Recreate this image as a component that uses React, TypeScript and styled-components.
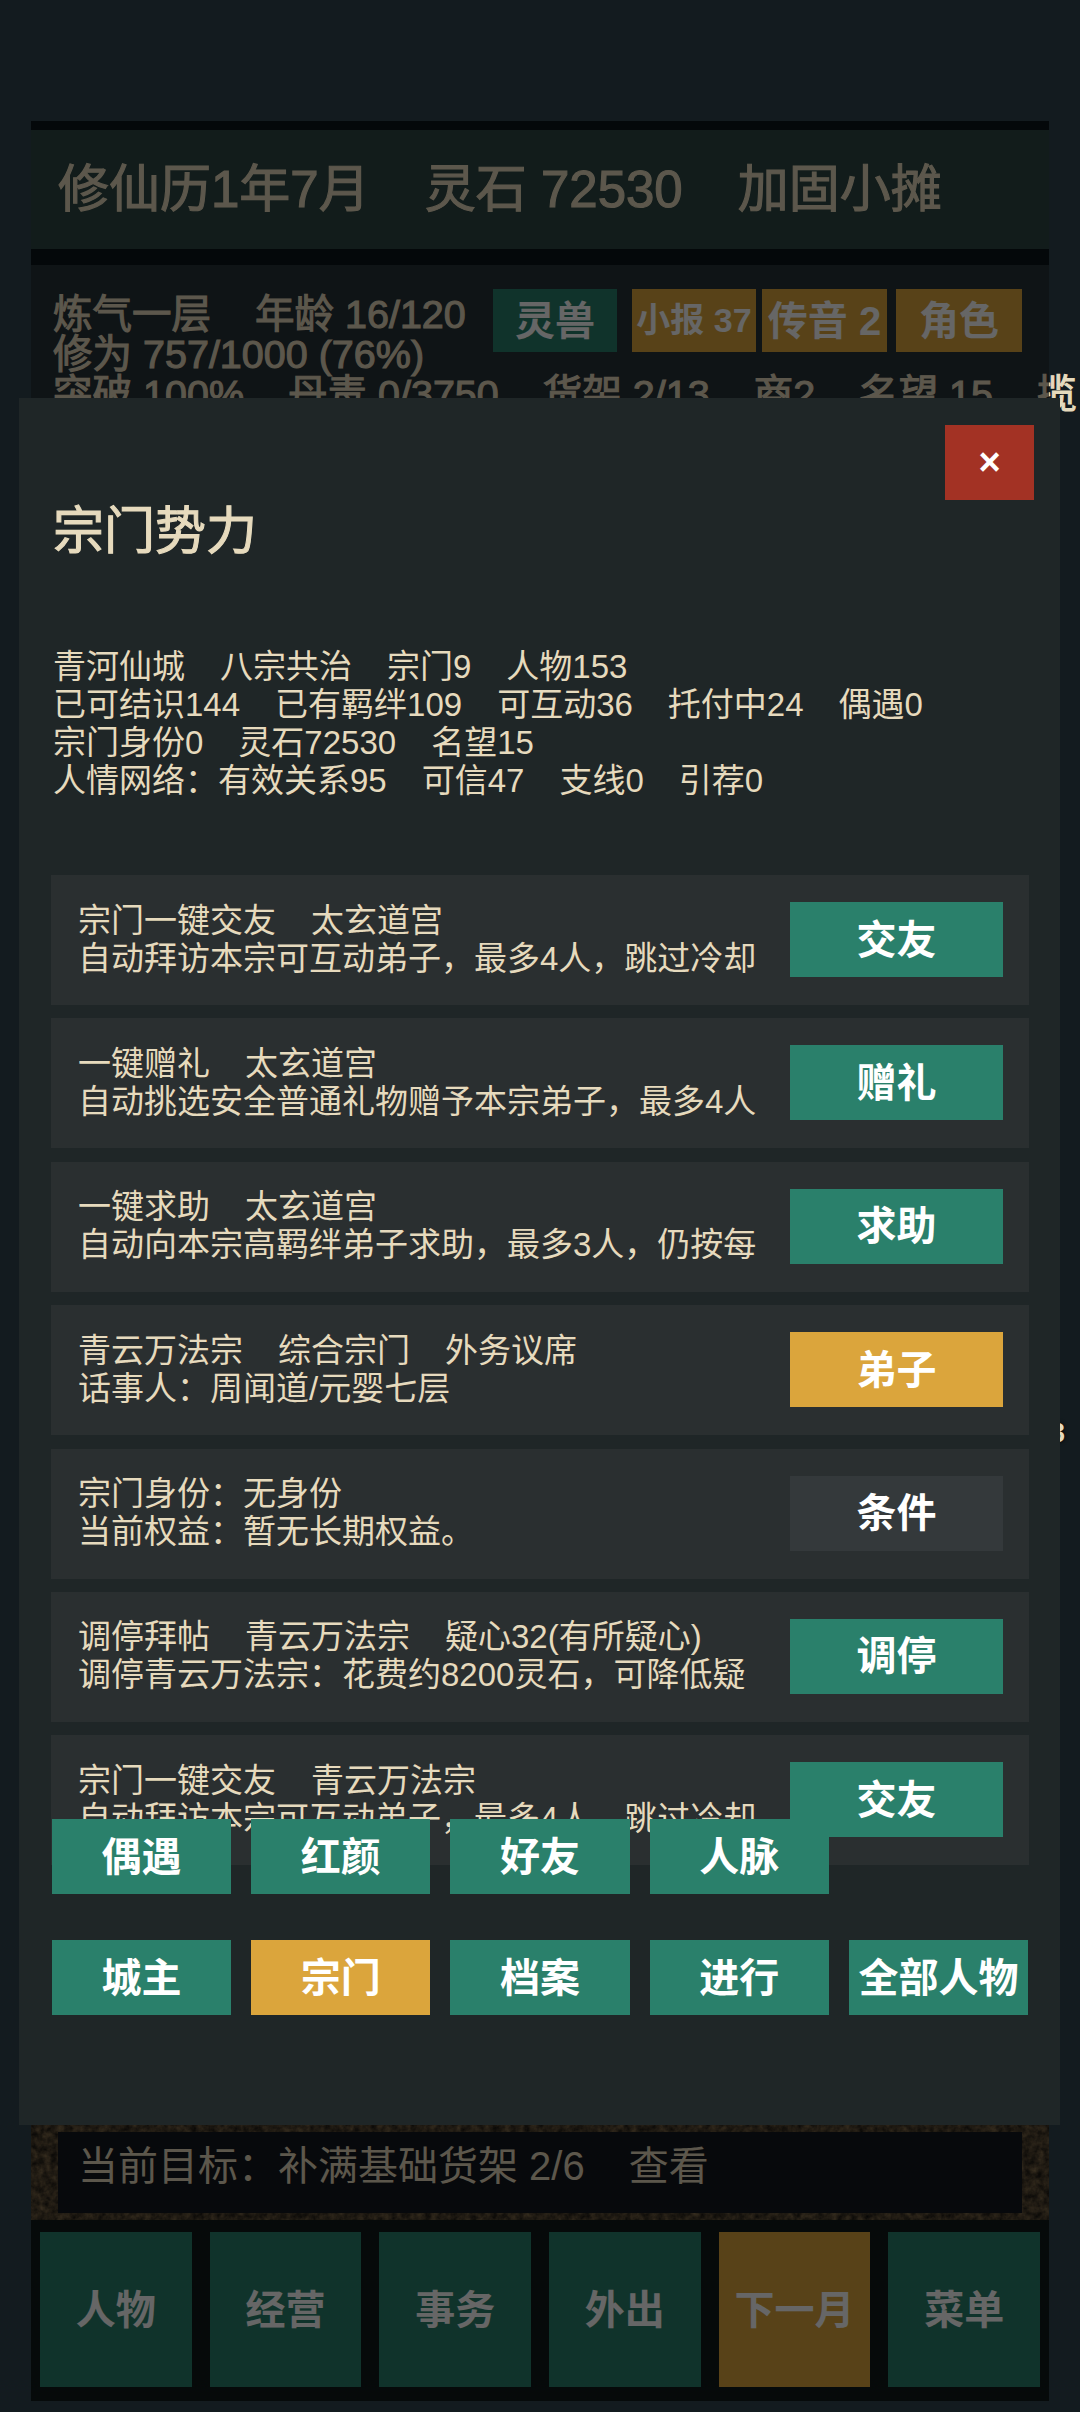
import React from "react";
import styled, { createGlobalStyle } from "styled-components";

const GlobalStyle = createGlobalStyle`
  html, body {
    margin: 0;
    padding: 0;
    background: #131b1f;
  }
  body {
    font-family: "Liberation Sans", "Noto Sans CJK SC", sans-serif;
    overflow: hidden;
  }
`;

type Tone = "teal" | "gold" | "grey";

const toneColors: Record<Tone, string> = {
  teal: "#2a806b",
  gold: "#dba53c",
  grey: "#34393b",
};

const Shell = styled.div`
  position: relative;
  width: 1080px;
  height: 2412px;
  overflow: hidden;
  padding: 121px 31px 11px;
  box-sizing: border-box;
`;

const Stage = styled.div`
  position: relative;
  height: 100%;
  display: flex;
  flex-direction: column;
  background: #0c1419;
  padding-top: 9px;
  box-sizing: border-box;
  color: #e6dabd;
`;

const TopBar = styled.div`
  height: 119px;
  display: flex;
  align-items: center;
  gap: 55px;
  padding-left: 27px;
  background: #2f4644;
  font-size: 51px;
  line-height: 58px;
  -webkit-text-stroke: 1.1px currentColor;
`;

const StatsPanel = styled.div`
  flex: 1;
  margin-top: 16px;
  padding: 24px 27px 0 22px;
  background: #263439;
`;

const QuickActions = styled.div`
  float: right;
  display: flex;
`;

const SmallButton = styled.div<{ $tone: Tone; $width: number; $before: number; $small?: boolean }>`
  width: ${(p) => p.$width}px;
  height: 63px;
  margin-left: ${(p) => p.$before}px;
  padding-bottom: 6px;
  box-sizing: border-box;
  display: flex;
  align-items: center;
  justify-content: center;
  background: ${(p) => toneColors[p.$tone]};
  color: #fff;
  font-size: ${(p) => (p.$small ? 34 : 40)}px;
  font-weight: 700;
  white-space: nowrap;
`;

const StatLine = styled.div<{ $first?: boolean }>`
  font-size: 39.5px;
  line-height: 40px;
  -webkit-text-stroke: 1.1px currentColor;
  white-space: nowrap;
  padding-top: ${(p) => (p.$first ? 5 : 0)}px;
  display: flex;
  gap: 44px;
`;

const GoalFrame = styled.div`
  position: relative;
  height: 114px;
  padding: 26px 27px 7px;
  box-sizing: border-box;
`;

const Grit = styled.svg`
  position: absolute;
  inset: 0;
  width: 100%;
  height: 100%;
`;

const GoalBar = styled.div`
  position: relative;
  height: 100%;
  display: flex;
  align-items: center;
  gap: 44px;
  padding: 0 20px 20px;
  box-sizing: border-box;
  background: #12171e;
  font-size: 40px;
`;

const NavBar = styled.div`
  height: 181px;
  padding: 12px 9px 14px;
  box-sizing: border-box;
  display: grid;
  grid-template-columns: repeat(6, 1fr);
  column-gap: 18px;
  background: #0f1919;
`;

const NavButton = styled.div<{ $tone: Tone }>`
  display: flex;
  align-items: center;
  justify-content: center;
  padding-bottom: 6px;
  box-sizing: border-box;
  background: ${(p) => toneColors[p.$tone]};
  color: #fff;
  font-size: 40px;
  font-weight: 700;
`;

const Scrim = styled.div`
  position: absolute;
  inset: 0;
  background: rgba(0, 0, 0, 0.6);
`;

const StrayDigit = styled.div`
  position: absolute;
  left: 1050px;
  top: 1418px;
  font-size: 27px;
  line-height: 30px;
  font-weight: 700;
  color: #e6dabd;
  text-shadow: 0 0 4px #000;
`;

const Modal = styled.div`
  position: absolute;
  left: 19px;
  top: 398px;
  width: 1041px;
  height: 1727px;
  padding-top: 27px;
  box-sizing: border-box;
  background: #1f2627;
  color: #e6dabd;
  overflow: hidden;
`;

const CloseRow = styled.div`
  display: flex;
  justify-content: flex-end;
  padding-right: 26px;
`;

const CloseButton = styled.div`
  width: 89px;
  height: 75px;
  display: flex;
  align-items: center;
  justify-content: center;
  background: #a33224;
  color: #fff;
  font-size: 38px;
  font-weight: 700;
`;

const ModalTitle = styled.h2`
  margin: 3px 0 0 34px;
  font-size: 51px;
  line-height: 58px;
  font-weight: 400;
  -webkit-text-stroke: 1.1px currentColor;
`;

const InfoBlock = styled.div`
  margin: 87px 0 75px 34px;
`;

const TextLine = styled.div`
  display: flex;
  gap: 35px;
  font-size: 33px;
  line-height: 38px;
  white-space: nowrap;
`;

const RowList = styled.div`
  display: flex;
  flex-direction: column;
  gap: 13.4px;
  margin: 0 31px 0 32px;
`;

const Row = styled.div`
  height: 130px;
  display: flex;
  align-items: center;
  justify-content: space-between;
  padding: 0 26px 1px 27px;
  box-sizing: border-box;
  background: #2a2f30;
`;

const RowButton = styled.div<{ $tone: Tone }>`
  width: 213px;
  height: 75px;
  padding-bottom: 6px;
  box-sizing: border-box;
  display: flex;
  align-items: center;
  justify-content: center;
  background: ${(p) => toneColors[p.$tone]};
  color: #fff;
  font-size: 40px;
  font-weight: 700;
`;

const TabDock = styled.div`
  position: absolute;
  left: 33px;
  bottom: 110px;
  width: 976px;
  display: grid;
  grid-template-columns: repeat(5, 1fr);
  grid-auto-rows: 75px;
  gap: 46px 20px;
`;

const TabButton = styled(RowButton)`
  width: auto;
`;

const info = [
  ["青河仙城", "八宗共治", "宗门9", "人物153"],
  ["已可结识144", "已有羁绊109", "可互动36", "托付中24", "偶遇0"],
  ["宗门身份0", "灵石72530", "名望15"],
  ["人情网络：有效关系95", "可信47", "支线0", "引荐0"],
];

const rows: { lines: string[][]; action: string; tone: Tone }[] = [
  {
    lines: [["宗门一键交友", "太玄道宫"], ["自动拜访本宗可互动弟子，最多4人，跳过冷却"]],
    action: "交友",
    tone: "teal",
  },
  {
    lines: [["一键赠礼", "太玄道宫"], ["自动挑选安全普通礼物赠予本宗弟子，最多4人"]],
    action: "赠礼",
    tone: "teal",
  },
  {
    lines: [["一键求助", "太玄道宫"], ["自动向本宗高羁绊弟子求助，最多3人，仍按每"]],
    action: "求助",
    tone: "teal",
  },
  {
    lines: [["青云万法宗", "综合宗门", "外务议席"], ["话事人：周闻道/元婴七层"]],
    action: "弟子",
    tone: "gold",
  },
  {
    lines: [["宗门身份：无身份"], ["当前权益：暂无长期权益。"]],
    action: "条件",
    tone: "grey",
  },
  {
    lines: [["调停拜帖", "青云万法宗", "疑心32(有所疑心)"], ["调停青云万法宗：花费约8200灵石，可降低疑"]],
    action: "调停",
    tone: "teal",
  },
  {
    lines: [["宗门一键交友", "青云万法宗"], ["自动拜访本宗可互动弟子，最多4人，跳过冷却"]],
    action: "交友",
    tone: "teal",
  },
];

const tabs: { label: string; tone: Tone; skipAfter?: boolean }[] = [
  { label: "偶遇", tone: "teal" },
  { label: "红颜", tone: "teal" },
  { label: "好友", tone: "teal" },
  { label: "人脉", tone: "teal", skipAfter: true },
  { label: "城主", tone: "teal" },
  { label: "宗门", tone: "gold" },
  { label: "档案", tone: "teal" },
  { label: "进行", tone: "teal" },
  { label: "全部人物", tone: "teal" },
];

const nav: { label: string; tone: Tone }[] = [
  { label: "人物", tone: "teal" },
  { label: "经营", tone: "teal" },
  { label: "事务", tone: "teal" },
  { label: "外出", tone: "teal" },
  { label: "下一月", tone: "gold" },
  { label: "菜单", tone: "teal" },
];

export default function App() {
  return (
    <Shell>
      <GlobalStyle />
      <Stage>
        <TopBar>
          <span>修仙历1年7月</span>
          <span>灵石 72530</span>
          <span>加固小摊</span>
        </TopBar>
        <StatsPanel>
          <QuickActions>
            <SmallButton $tone="teal" $width={124} $before={0}>灵兽</SmallButton>
            <SmallButton $tone="gold" $width={124} $before={15} $small>小报 37</SmallButton>
            <SmallButton $tone="gold" $width={125} $before={6}>传音 2</SmallButton>
            <SmallButton $tone="gold" $width={126} $before={9}>角色</SmallButton>
          </QuickActions>
          <StatLine $first>
            <span>炼气一层</span>
            <span>年龄 16/120</span>
          </StatLine>
          <StatLine>修为 757/1000 (76%)</StatLine>
          <StatLine>
            <span>突破 100%</span>
            <span>丹毒 0/3750</span>
            <span>货架 2/13</span>
            <span>商2</span>
            <span>名望 15</span>
            <span>揽</span>
          </StatLine>
        </StatsPanel>
        <GoalFrame>
          <Grit aria-hidden="true">
            <filter id="grit" colorInterpolationFilters="sRGB">
              <feTurbulence type="fractalNoise" baseFrequency="0.15" numOctaves="3" seed="4" />
              <feColorMatrix values="0.55 0 0 0 0.03  0.45 0 0 0 0.03  0.3 0 0 0 0.03  0 0 0 0 1" />
            </filter>
            <rect width="100%" height="100%" filter="url(#grit)" />
          </Grit>
          <GoalBar>
            <span>当前目标：补满基础货架 2/6</span>
            <span>查看</span>
          </GoalBar>
        </GoalFrame>
        <NavBar>
          {nav.map((item) => (
            <NavButton key={item.label} $tone={item.tone}>
              {item.label}
            </NavButton>
          ))}
        </NavBar>
        <Scrim />
      </Stage>
      <StrayDigit>3</StrayDigit>
      <Modal>
        <CloseRow>
          <CloseButton>×</CloseButton>
        </CloseRow>
        <ModalTitle>宗门势力</ModalTitle>
        <InfoBlock>
          {info.map((line, i) => (
            <TextLine key={i}>
              {line.map((part) => (
                <span key={part}>{part}</span>
              ))}
            </TextLine>
          ))}
        </InfoBlock>
        <RowList>
          {rows.map((row, i) => (
            <Row key={i}>
              <div>
                {row.lines.map((line, j) => (
                  <TextLine key={j}>
                    {line.map((part) => (
                      <span key={part}>{part}</span>
                    ))}
                  </TextLine>
                ))}
              </div>
              <RowButton $tone={row.tone}>{row.action}</RowButton>
            </Row>
          ))}
        </RowList>
        <TabDock>
          {tabs.map((tab) => (
            <React.Fragment key={tab.label}>
              <TabButton $tone={tab.tone}>{tab.label}</TabButton>
              {tab.skipAfter && <span />}
            </React.Fragment>
          ))}
        </TabDock>
      </Modal>
    </Shell>
  );
}
